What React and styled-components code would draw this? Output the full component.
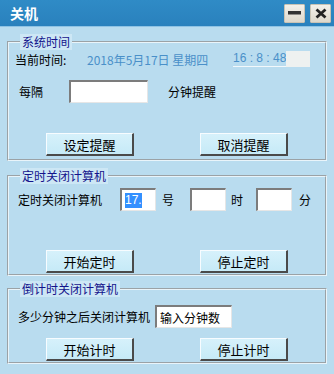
import React from "react";
import styled, { createGlobalStyle } from "styled-components";

const GlobalStyle = createGlobalStyle`
  html, body {
    margin: 0;
    padding: 0;
    background: #b9dcef;
  }
  body {
    font-family: "Noto Sans CJK SC", "Liberation Sans", sans-serif;
    font-size: 12px;
    color: #000;
  }
`;

const Window = styled.div`
  width: 334px;
  height: 374px;
  display: flex;
  flex-direction: column;
  background: #b9dcef;
  overflow: hidden;
`;

const TitleBar = styled.header`
  height: 27px;
  display: flex;
  align-items: center;
  padding: 0 3px 0 10px;
  background: linear-gradient(#2f8bc6, #2a81bd);
  border-bottom: 1px solid #8fc3e4;
  box-sizing: border-box;
`;

const Title = styled.h1`
  flex: 1;
  margin: 0;
  font-size: 14px;
  font-weight: 700;
  color: #fff;
`;

const CaptionButton = styled.button`
  width: 21px;
  height: 19px;
  margin-left: ${(p) => p.$gap || 0}px;
  padding: 0;
  display: flex;
  align-items: center;
  justify-content: center;
  background: linear-gradient(#f4f1ea, #ddd8cc);
  border: 1px solid #c9c3b4;
  border-radius: 1px;
`;

const Body = styled.main`
  flex: 1;
  padding: 7px 7px 0;
  display: flex;
  flex-direction: column;
`;

const Group = styled.fieldset`
  margin: ${(p) => p.$top || 0}px 0 0;
  padding: 0 5px ${(p) => p.$bottom || 0}px 6px;
  border: 2px groove #e9f4fa;
  min-width: 0;
`;

const Legend = styled.legend`
  padding: 0 2px;
  margin-left: 5px;
  font-size: 12px;
  line-height: 16px;
  color: #14148c;
  background: #cde7f5;
`;

const Row = styled.div`
  display: flex;
  align-items: center;
  height: ${(p) => p.$h || 23}px;
  margin-top: ${(p) => p.$top || 0}px;
  padding-left: ${(p) => p.$left || 0}px;
`;

const Label = styled.span`
  width: ${(p) => (p.$w ? `${p.$w}px` : "auto")};
  flex: none;
  white-space: nowrap;
`;

const DateText = styled.span`
  width: 146px;
  color: #4a90c9;
  white-space: nowrap;
`;

const TimeText = styled.span`
  color: #4a90c9;
  white-space: nowrap;
  border-bottom: 1px solid #f2f8fb;
  padding-bottom: 1px;
  font-family: "Liberation Sans", sans-serif;
`;

const TimeBlank = styled.span`
  width: 24px;
  height: 16px;
  background: #eef1f0;
`;

const Field = styled.div`
  width: ${(p) => p.$w}px;
  height: 23px;
  box-sizing: border-box;
  flex: none;
  margin-right: ${(p) => p.$mr || 0}px;
  background: #fff;
  border-top: 2px solid #7c7c7c;
  border-left: 2px solid #7c7c7c;
  border-right: 1px solid #e6e6e6;
  border-bottom: 1px solid #e6e6e6;
  display: flex;
  align-items: center;
  padding-left: 3px;
  white-space: nowrap;
`;

const Selected = styled.span`
  background: #3390ff;
  color: #fff;
  font-family: "Liberation Sans", sans-serif;
  line-height: 15px;
`;

const ButtonRow = styled.div`
  display: flex;
  gap: 66px;
  margin-top: ${(p) => p.$top}px;
  padding-left: 31px;
`;

const Button = styled.button`
  width: 88px;
  height: 23px;
  padding: 0;
  font-family: inherit;
  font-size: 13px;
  color: #000;
  background: linear-gradient(#d6f1fb, #c6eaf7);
  border-top: 1px solid #f7fcff;
  border-left: 1px solid #f7fcff;
  border-right: 2px solid #4a4a4a;
  border-bottom: 2px solid #4a4a4a;
  box-sizing: border-box;
`;

export default function App() {
  return (
    <>
      <GlobalStyle />
      <Window>
        <TitleBar>
          <Title>关机</Title>
          <CaptionButton aria-label="最小化">
            <svg width="13" height="4" viewBox="0 0 13 4">
              <rect width="13" height="3.5" fill="#333" />
            </svg>
          </CaptionButton>
          <CaptionButton $gap={5} aria-label="关闭">
            <svg width="12" height="11" viewBox="0 0 12 11">
              <path d="M1.5 1.5 L10.5 9.5 M10.5 1.5 L1.5 9.5" stroke="#222" strokeWidth="2.8" />
            </svg>
          </CaptionButton>
        </TitleBar>
        <Body>
          <Group $bottom={3}>
            <Legend>系统时间</Legend>
            <Row $h={18}>
              <Label $w={72}>当前时间:</Label>
              <DateText>2018年5月17日 星期四</DateText>
              <TimeText>16 : 8 : 48</TimeText>
              <TimeBlank />
            </Row>
            <Row $top={12} $left={4}>
              <Label $w={50}>每隔</Label>
              <Field $w={79} $mr={20} />
              <Label>分钟提醒</Label>
            </Row>
            <ButtonRow $top={30}>
              <Button>设定提醒</Button>
              <Button>取消提醒</Button>
            </ButtonRow>
          </Group>

          <Group $top={7} $bottom={1}>
            <Legend>定时关闭计算机</Legend>
            <Row $top={4} $left={3}>
              <Label $w={102}>定时关闭计算机</Label>
              <Field $w={36} $mr={6}>
                <Selected>17.</Selected>
              </Field>
              <Label $w={28}>号</Label>
              <Field $w={36} $mr={5} />
              <Label $w={25}>时</Label>
              <Field $w={36} $mr={7} />
              <Label>分</Label>
            </Row>
            <ButtonRow $top={39}>
              <Button>开始定时</Button>
              <Button>停止定时</Button>
            </ButtonRow>
          </Group>

          <Group $top={5} $bottom={1}>
            <Legend>倒计时关闭计算机</Legend>
            <Row $top={8} $left={3}>
              <Label $w={137}>多少分钟之后关闭计算机</Label>
              <Field $w={77}>输入分钟数</Field>
            </Row>
            <ButtonRow $top={10}>
              <Button>开始计时</Button>
              <Button>停止计时</Button>
            </ButtonRow>
          </Group>
        </Body>
      </Window>
    </>
  );
}
